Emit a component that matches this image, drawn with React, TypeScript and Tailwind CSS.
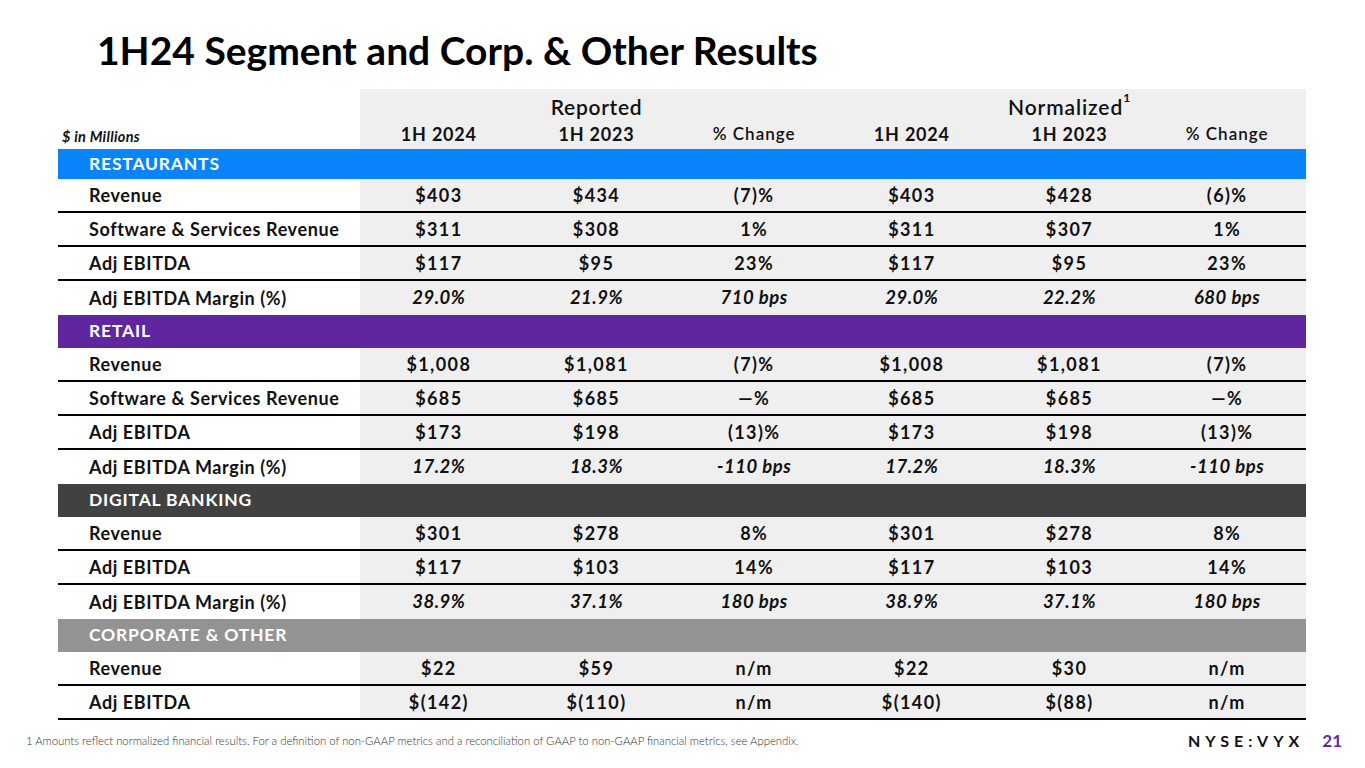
type Row = {
  label: string;
  values: string[];
  italic?: boolean;
  line?: boolean;
};

type Section = {
  name: string;
  band: string;
  height: string;
  rows: Row[];
};

const sections: Section[] = [
  {
    name: 'RESTAURANTS',
    band: 'bg-[#0a84fb]',
    height: 'h-[30px]',
    rows: [
      { label: 'Revenue', values: ['$403', '$434', '(7)%', '$403', '$428', '(6)%'], line: true },
      { label: 'Software & Services Revenue', values: ['$311', '$308', '1%', '$311', '$307', '1%'], line: true },
      { label: 'Adj EBITDA', values: ['$117', '$95', '23%', '$117', '$95', '23%'], line: true },
      { label: 'Adj EBITDA Margin (%)', values: ['29.0%', '21.9%', '710 bps', '29.0%', '22.2%', '680 bps'], italic: true },
    ],
  },
  {
    name: 'RETAIL',
    band: 'bg-[#5f269f]',
    height: 'h-[33px]',
    rows: [
      { label: 'Revenue', values: ['$1,008', '$1,081', '(7)%', '$1,008', '$1,081', '(7)%'], line: true },
      { label: 'Software & Services Revenue', values: ['$685', '$685', '—%', '$685', '$685', '—%'], line: true },
      { label: 'Adj EBITDA', values: ['$173', '$198', '(13)%', '$173', '$198', '(13)%'], line: true },
      { label: 'Adj EBITDA Margin (%)', values: ['17.2%', '18.3%', '-110 bps', '17.2%', '18.3%', '-110 bps'], italic: true },
    ],
  },
  {
    name: 'DIGITAL BANKING',
    band: 'bg-[#414141]',
    height: 'h-[33px]',
    rows: [
      { label: 'Revenue', values: ['$301', '$278', '8%', '$301', '$278', '8%'], line: true },
      { label: 'Adj EBITDA', values: ['$117', '$103', '14%', '$117', '$103', '14%'], line: true },
      { label: 'Adj EBITDA Margin (%)', values: ['38.9%', '37.1%', '180 bps', '38.9%', '37.1%', '180 bps'], italic: true },
    ],
  },
  {
    name: 'CORPORATE & OTHER',
    band: 'bg-[#939393]',
    height: 'h-[33px]',
    rows: [
      { label: 'Revenue', values: ['$22', '$59', 'n/m', '$22', '$30', 'n/m'], line: true },
      { label: 'Adj EBITDA', values: ['$(142)', '$(110)', 'n/m', '$(140)', '$(88)', 'n/m'], line: true },
    ],
  },
];

const font = { fontFamily: 'Lato, "Noto Sans", sans-serif' };

export default function App() {
  return (
    <div className="w-[1365px] h-[768px] bg-white overflow-hidden text-[#111]" style={font}>
      {/* Title */}
      <h1 className="pl-[97px] pt-[25px] h-[89px] text-[39px] leading-[50px] font-bold text-black">
        1H24 Segment and Corp. &amp; Other Results
      </h1>

      {/* Table */}
      <div className="ml-[58px] w-[1248px]">
        {/* Header */}
        <div className="grid grid-cols-[302px_repeat(6,1fr)] h-[60px]">
          <div className="flex items-end pb-[1px] pl-[4px] text-[14.5px] tracking-[0.3px] italic font-bold">$ in Millions</div>
          <div className="col-span-6 bg-[#efefef] grid grid-cols-6">
            <div className="col-span-3 flex items-center justify-center h-[30px] pt-[6px] text-[21px] tracking-[0.7px] font-semibold">
              Reported
            </div>
            <div className="col-span-3 flex items-center justify-center h-[30px] pt-[6px] text-[21px] tracking-[0.9px] font-semibold">
              Normalized<sup className="text-[12px] -top-[9px] font-bold">1</sup>
            </div>
            <div className="flex items-center justify-center h-[30px] text-[18px] tracking-[0.8px] font-bold">1H 2024</div>
            <div className="flex items-center justify-center h-[30px] text-[18px] tracking-[0.8px] font-bold">1H 2023</div>
            <div className="flex items-center justify-center h-[30px] text-[17px] tracking-[1px] font-semibold">% Change</div>
            <div className="flex items-center justify-center h-[30px] text-[18px] tracking-[0.8px] font-bold">1H 2024</div>
            <div className="flex items-center justify-center h-[30px] text-[18px] tracking-[0.8px] font-bold">1H 2023</div>
            <div className="flex items-center justify-center h-[30px] text-[17px] tracking-[1px] font-semibold">% Change</div>
          </div>
        </div>

        {sections.map((s) => (
          <div key={s.name}>
            <div className={`${s.band} ${s.height} flex items-center pl-[31px] text-white text-[17.5px] tracking-[0.8px] font-bold`}>
              {s.name}
            </div>
            {s.rows.map((r, i) => (
              <div
                key={i}
                className={`grid grid-cols-[302px_repeat(6,1fr)] h-[34px] ${r.line ? 'border-b-2 border-black' : ''}`}
              >
                <div className="flex items-center pl-[31px] text-[18px] tracking-[0.6px] font-bold">{r.label}</div>
                {r.values.map((v, j) => (
                  <div
                    key={j}
                    className={`bg-[#efefef] flex items-center justify-center ${
                      r.italic ? 'text-[18.5px] tracking-[0.5px] italic font-bold' : 'text-[18px] tracking-[1.4px] font-bold'
                    }`}
                  >
                    {v}
                  </div>
                ))}
              </div>
            ))}
          </div>
        ))}
      </div>

      {/* Footer */}
      <div className="flex items-center h-[42px] pl-[26px] pr-[23px]">
        <p className="text-[11.3px] text-[#333] font-light flex-1">
          1 Amounts reflect normalized financial results. For a definition of non-GAAP metrics and a reconciliation of GAAP to non-GAAP financial metrics, see Appendix.
        </p>
        <span className="text-[16px] font-bold tracking-[5px] text-[#111] mr-[18px]">NYSE:VYX</span>
        <span className="text-[17px] font-bold text-[#5b2d9e]">21</span>
      </div>
    </div>
  );
}
